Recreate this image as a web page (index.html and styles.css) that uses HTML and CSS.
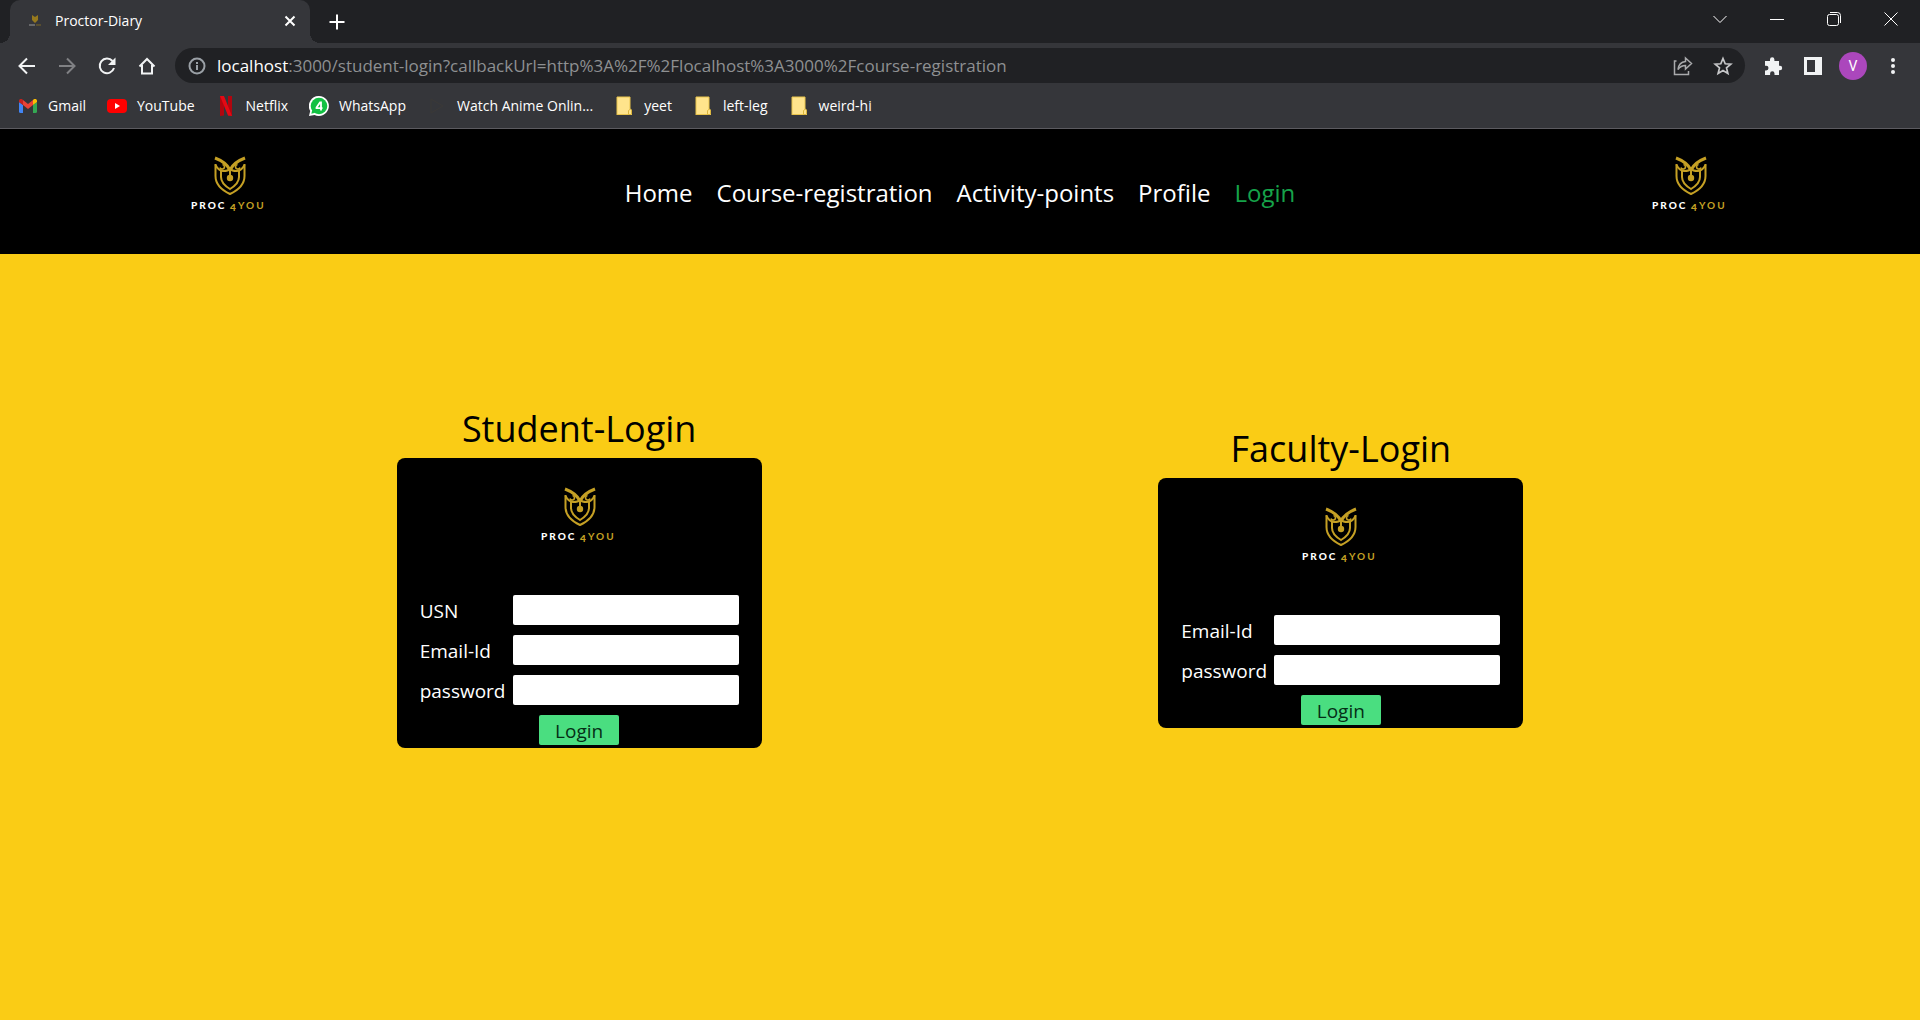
FILE: index.html
```html
<!DOCTYPE html>
<html lang="en">
<head>
<meta charset="utf-8">
<meta name="viewport" content="width=device-width, initial-scale=1">
<title>Proctor-Diary</title>
<link rel="stylesheet" href="styles.css">
</head>
<body>
<svg class="sprites" aria-hidden="true">
  <symbol id="owl" viewBox="0 0 32 40">
    <g fill="none" stroke="#c5a024" stroke-width="2">
      <path d="M1.500 8v12c0 9 6 14 14.500 18 8.500-4 14.500-9 14.500-18V8"/>
      <path d="M1.500 9c2 4 5 6 8 6s5-.5 6.500-2M30.500 9c-2 4-5 6-8 6s-5-.5-6.500-2"/>
      <path d="M7 15v6c0 5.500 4 9 9 12 5-3 9-6.500 9-12v-6"/>
      <path d="M1 2c8 3 12 6 15 12C19 8 23 5 31 2" stroke-width="3"/>
      <path d="M8.500 8.500a2.300 2.300 0 1 1-2.500 3M23.500 8.500a2.300 2.300 0 1 0 2.500 3" stroke-width="1.600"/>
      <path d="M16 14v7"/>
    </g>
    <circle cx="16" cy="22" r="3.200" fill="#c5a024"/>
  </symbol>
  <symbol id="folder" viewBox="0 0 20 20">
    <path d="M3 1h13v12l2 2v4H3z" fill="#ffe48c"/>
    <path d="M3 1h13v12M3 19V1M3 18.500h13" fill="none" stroke="#e9c44c"/>
    <path d="M14.500 18.500v-4l2-1.500 1 1v4.500z" fill="#ffe48c" stroke="#dcb63d"/>
  </symbol>
</svg>

<header class="browser">
  <div class="tabstrip">
    <div class="tab">
      <svg class="favicon" viewBox="0 0 20 20"><path d="M7 4l3 2 3-2v5l-3 3-3-3z" fill="#96791d"/><path d="M4 14h6" stroke="#999" /><path d="M11 14h5" stroke="#7c6627"/></svg>
      <span class="tab-title">Proctor-Diary</span>
      <button class="tab-close" aria-label="Close tab"><svg width="12" height="12" viewBox="0 0 12 12"><path d="M1.500 1.500l9 9m0-9l-9 9" stroke="#fff" stroke-width="2"/></svg></button>
    </div>
    <button class="new-tab" aria-label="New tab"><svg width="16" height="16" viewBox="0 0 16 16"><path d="M8 .5v15M.5 8h15" stroke="#fff" stroke-width="2"/></svg></button>
    <div class="window-buttons">
      <button aria-label="Search tabs"><svg width="14" height="14" viewBox="0 0 14 14"><path d="M.5 4L7 10.500 13.500 4"/></svg></button>
      <button aria-label="Minimize"><svg width="14" height="14" viewBox="0 0 14 14"><path d="M0 7.500h14"/></svg></button>
      <button aria-label="Restore"><svg width="14" height="14" viewBox="0 0 14 14"><rect x=".5" y="2.500" width="11" height="11" rx="2"/><path d="M3 .5h7.500a3 3 0 0 1 3 3V11"/></svg></button>
      <button aria-label="Close"><svg width="14" height="14" viewBox="0 0 14 14"><path d="M.5.5l13 13m0-13l-13 13"/></svg></button>
    </div>
  </div>

  <div class="toolbar">
    <div class="tools">
      <button aria-label="Back"><svg width="20" height="20" viewBox="0 0 20 20"><path d="M18 10H3M10 2.500L2.500 10l7.500 7.500" stroke="#f1f3f4"/></svg></button>
      <button aria-label="Forward"><svg width="20" height="20" viewBox="0 0 20 20"><path d="M2 10h15M10 2.500l7.500 7.500-7.500 7.500" stroke="#808184"/></svg></button>
      <button aria-label="Reload"><svg width="20" height="20" viewBox="0 0 20 20"><path d="M15.500 5A7.300 7.300 0 1 0 17 12" stroke="#f1f3f4"/><path d="M18.500 1.500v7.500H11z" fill="#f1f3f4"/></svg></button>
      <button aria-label="Home"><svg width="20" height="20" viewBox="0 0 20 20"><path d="M2.500 10.500L10 3l7.500 7.500M5 9v8.500h10V9" stroke="#f1f3f4"/></svg></button>
    </div>
    <div class="omnibox">
      <svg class="info" width="18" height="18" viewBox="0 0 18 18"><circle cx="9" cy="9" r="7.500"/><path d="M9 8v5M9 5v2"/></svg>
      <div class="url" role="textbox" aria-label="Address"><span class="host">localhost</span>:3000/student-login?callbackUrl=http%3A%2F%2Flocalhost%3A3000%2Fcourse-registration</div>
      <button aria-label="Share"><svg width="20" height="20" viewBox="0 0 20 20"><path class="thin" d="M3.500 5H1.500v13.500h14V15" stroke="#a9aaac"/><path class="thin" d="M12.500 2l6 5.500-6 5.500v-3.500C9 9.500 7 10.500 5 13.500c.5-5 3-7.500 7.500-8z" stroke="#a9aaac"/></svg></button>
      <button aria-label="Bookmark this page"><svg width="20" height="20" viewBox="0 0 20 20"><path d="M10 2.500l2.200 5.300 5.600.4-4.300 3.700 1.400 5.600-4.900-3-4.900 3 1.400-5.600-4.300-3.700 5.600-.4z" stroke="#c6c7c9" stroke-width="1.700"/></svg></button>
    </div>
    <div class="tools">
      <button aria-label="Extensions"><svg width="20" height="20" viewBox="0 0 20 20"><path d="M2 5h5V3.500a2.200 2.200 0 0 1 4.400 0V5H16v4.800h1a2.200 2.200 0 0 1 0 4.400h-1V19h-4.500v-1.500a2.200 2.200 0 0 0-4.400 0V19H2v-4.600h1.200a2.200 2.200 0 0 0 0-4.600H2z" fill="#f1f3f4"/></svg></button>
      <button aria-label="Side panel"><svg width="20" height="20" viewBox="0 0 20 20"><path d="M1 1h18v18H1zM4 4v12h8V4z" fill="#f1f3f4" fill-rule="evenodd"/></svg></button>
      <button aria-label="Account"><span class="avatar">V</span></button>
      <button aria-label="Menu"><svg width="20" height="20" viewBox="0 0 20 20"><g fill="#f1f3f4"><circle cx="10" cy="4" r="2"/><circle cx="10" cy="10" r="2"/><circle cx="10" cy="16" r="2"/></g></svg></button>
    </div>
  </div>

  <nav class="bookmarks" aria-label="Bookmarks">
    <a href="#"><svg viewBox="0 0 20 20"><path d="M1 6l4 3v8H2.500Q1 17 1 15.500z" fill="#4285f4"/><path d="M19 6l-4 3v8h2.500q1.500 0 1.500-1.500z" fill="#34a853"/><path d="M1 6V5c0-2 2-2.500 3.500-1.500L5 4v5z" fill="#c5221f"/><path d="M19 6V5c0-2-2-2.500-3.500-1.500L15 4v5z" fill="#fbbc04"/><path d="M5 4l5 4 5-4v5l-5 4-5-4z" fill="#ea4335"/></svg>Gmail</a>
    <a href="#"><svg viewBox="0 0 20 20"><rect y="3" width="20" height="14" rx="4" fill="#f00"/><path d="M8 7l5 3-5 3z" fill="#fff"/></svg>YouTube</a>
    <a href="#"><svg viewBox="0 0 20 20"><path d="M4 0h4v19.500L4 20zM12 0h4v20l-4-.5z" fill="#b1060f"/><path d="M4 0h4l8 20-4-.5z" fill="#e50914"/></svg>Netflix</a>
    <a href="#"><svg viewBox="0 0 20 20"><path d="M10 0a10 10 0 1 1-4.500 19L0 20l1.200-5A10 10 0 0 1 10 0z" fill="#fff"/><circle cx="10" cy="10" r="8.300" fill="#12c143"/><path d="M2.300 17.700l1-4 3 3z" fill="#12c143"/><path d="M12 14.500V6.500h-1L7.500 11.500v.7h6" fill="none" stroke="#fff" stroke-width="1.800"/></svg>WhatsApp</a>
    <a href="#"><svg viewBox="0 0 20 20"><path d="M4 3l12 7-12 7z" fill="none" stroke="#3b3937"/></svg>Watch Anime Onlin...</a>
    <a href="#"><svg viewBox="0 0 20 20"><use href="#folder"/></svg>yeet</a>
    <a href="#"><svg viewBox="0 0 20 20"><use href="#folder"/></svg>left-leg</a>
    <a href="#"><svg viewBox="0 0 20 20"><use href="#folder"/></svg>weird-hi</a>
  </nav>
</header>

<nav class="site-nav" aria-label="Main">
  <svg class="logo" viewBox="0 0 125 125" role="img" aria-label="Proc 4 You"><use href="#owl" x="47" y="27" width="32" height="40"/><text class="proc" x="24" y="80">PROC</text><text class="four" x="63" y="82">4</text><text class="you" x="71" y="80">YOU</text></svg>
  <div class="links">
    <a href="#">Home</a>
    <a href="#">Course-registration</a>
    <a href="#">Activity-points</a>
    <a href="#">Profile</a>
    <a href="#" class="current">Login</a>
  </div>
  <svg class="logo" viewBox="0 0 125 125" role="img" aria-label="Proc 4 You"><use href="#owl" x="47" y="27" width="32" height="40"/><text class="proc" x="24" y="80">PROC</text><text class="four" x="63" y="82">4</text><text class="you" x="71" y="80">YOU</text></svg>
</nav>

<main class="logins">
  <section>
    <h1>Student-Login</h1>
    <form class="card">
      <svg class="logo" viewBox="0 0 125 125" role="img" aria-label="Proc 4 You"><use href="#owl" x="47" y="27" width="32" height="40"/><text class="proc" x="24" y="80">PROC</text><text class="four" x="63" y="82">4</text><text class="you" x="71" y="80">YOU</text></svg>
      <div class="field"><label for="usn">USN</label><input id="usn" type="text"></div>
      <div class="field"><label for="student-email">Email-Id</label><input id="student-email" type="email"></div>
      <div class="field"><label for="student-password">password</label><input id="student-password" type="password"></div>
      <button class="submit" type="submit">Login</button>
    </form>
  </section>
  <section>
    <h1>Faculty-Login</h1>
    <form class="card">
      <svg class="logo" viewBox="0 0 125 125" role="img" aria-label="Proc 4 You"><use href="#owl" x="47" y="27" width="32" height="40"/><text class="proc" x="24" y="80">PROC</text><text class="four" x="63" y="82">4</text><text class="you" x="71" y="80">YOU</text></svg>
      <div class="field"><label for="faculty-email">Email-Id</label><input id="faculty-email" type="email"></div>
      <div class="field"><label for="faculty-password">password</label><input id="faculty-password" type="password"></div>
      <button class="submit" type="submit">Login</button>
    </form>
  </section>
</main>
</body>
</html>
```
FILE: styles.css
```css
* { box-sizing: border-box; }

body {
  margin: 0;
  min-height: 100vh;
  display: flex;
  flex-direction: column;
  background: #facc15;
  font-family: "Open Sans", "Noto Sans", sans-serif;
}

button {
  padding: 0;
  border: 0;
  background: none;
  font: inherit;
}

a { color: inherit; text-decoration: none; }

.sprites { display: none; }

/* Browser window */
.browser {
  background: #35363a;
  border-bottom: 1px solid #5c5b60;
  color: #fff;
  font-size: 14px;
}

.tabstrip {
  display: flex;
  height: 43px;
  padding: 0 1px 0 10px;
  background: #202124;
}

.tab {
  position: relative;
  display: flex;
  align-items: center;
  width: 300px;
  padding: 0 14px 2px 15px;
  border-radius: 10px 10px 0 0;
  background: #35363a;
}

/* Curved feet joining the active tab to the toolbar */
.tab::before,
.tab::after {
  content: "";
  position: absolute;
  bottom: 0;
  width: 10px;
  height: 10px;
}

.tab::before {
  right: 100%;
  background: radial-gradient(circle at 0 0, #202124 10px, #35363a 10px);
}

.tab::after {
  left: 100%;
  background: radial-gradient(circle at 100% 0, #202124 10px, #35363a 10px);
}

.favicon { width: 20px; height: 20px; margin-right: 10px; }
.tab-title { flex: 1; }
.tab-close { display: flex; }

.new-tab {
  display: flex;
  align-items: center;
  margin-left: 19px;
}

.window-buttons {
  display: flex;
  height: 37px;
  margin-left: auto;
}

.window-buttons button {
  display: grid;
  place-items: center;
  width: 57px;
}

.window-buttons svg { fill: none; stroke: #fff; }

.toolbar {
  display: flex;
  align-items: center;
  gap: 8px;
  height: 45px;
  padding: 0 7px;
}

.tools { display: flex; }

.toolbar button {
  display: grid;
  place-items: center;
  width: 40px;
  height: 36px;
}

.toolbar svg { fill: none; stroke-width: 2; }
.toolbar .thin { stroke-width: 1.5; }

.omnibox {
  flex: 1;
  min-width: 0;
  display: flex;
  align-items: center;
  height: 35px;
  padding: 0 2px 0 13px;
  border-radius: 18px;
  background: #202124;
}

.info { margin-right: 11px; stroke: #9aa0a6; }

.url {
  flex: 1;
  overflow: hidden;
  white-space: nowrap;
  color: #8e9092;
  font-size: 17px;
}

.host { color: #fff; }

.avatar {
  display: grid;
  place-items: center;
  width: 28px;
  height: 28px;
  border-radius: 50%;
  background: #ab47bc;
  color: #fff;
  font: 14px Roboto, sans-serif;
}

.bookmarks {
  display: flex;
  align-items: center;
  gap: 21px;
  height: 40px;
  padding: 0 18px 5px;
}

.bookmarks a {
  display: flex;
  align-items: center;
  gap: 10px;
  white-space: nowrap;
}

.bookmarks svg { width: 20px; height: 20px; }

/* Site */
.site-nav {
  display: flex;
  justify-content: space-around;
  align-items: center;
  background: #000;
  color: #fff;
}

.logo {
  display: block;
  width: 125px;
  height: 125px;
  font: 900 10px Lato, sans-serif;
  letter-spacing: 2px;
  fill: #c5a024;
}

.logo .proc { fill: #fff; }
.logo .you { font-weight: 700; }

.links {
  display: flex;
  gap: 24px;
  padding-top: 2px;
  font-size: 24px;
}

.current { color: #16a34a; }

.logins {
  flex: 1;
  display: flex;
  justify-content: space-evenly;
  align-items: center;
  padding-bottom: 118px;
}

h1 {
  margin: 0 0 8px;
  font-size: 36px;
  font-weight: 400;
  line-height: 42px;
  text-align: center;
}

.card {
  display: flex;
  flex-direction: column;
  align-items: center;
  gap: 10px;
  width: 365px;
  padding: 2px 0 3px;
  border-radius: 8px;
  background: #000;
  color: #fff;
  font-size: 19px;
}

.field { display: flex; align-items: center; }

.field label { width: 93px; line-height: 32px; margin-bottom: -2px; }

.field input {
  width: 226px;
  height: 30px;
  padding: 0 8px;
  border: 0;
  border-radius: 2px;
  background: #fff;
  font: inherit;
}

.submit {
  width: 80px;
  height: 30px;
  padding-top: 1px;
  border-radius: 2px;
  background: #4ade80;
  color: #052e16;
}
```
